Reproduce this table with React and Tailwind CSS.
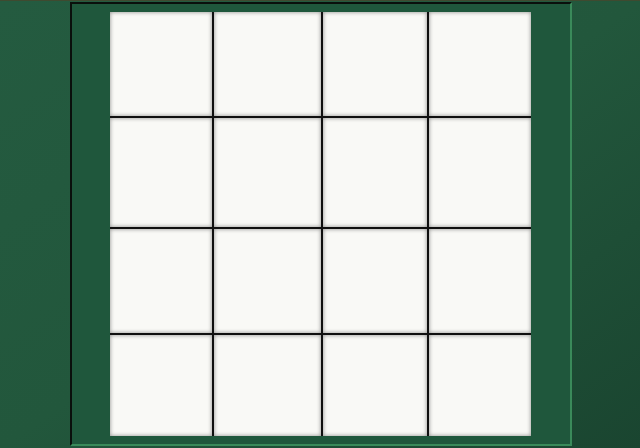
const rows = [0, 1, 2, 3];
const cols = [0, 1, 2, 3];

export default function App() {
    return (
        <div className="w-[640px] h-[448px] overflow-hidden bg-gradient-to-br from-[#245b40] via-[#22573c] to-[#1a4530] border-t border-[#3f4a30]">
            <div className="pl-[70px] pt-[1px]">
                {/* board frame */}
                <div className="w-[502px] h-[444px] bg-[#1f573c] border-l-2 border-t-2 border-[#0a0f0c] border-r-2 border-b-2 border-r-[#3a8a5a] border-b-[#3a8a5a] pl-[38px] pt-[8px]">
                    <div className="grid grid-cols-[102px_107px_104px_102px] grid-rows-[104px_109px_104px_101px] gap-[2px] bg-[#101010] w-fit">
                        {rows.map((r) =>
                            cols.map((c) => (
                                <div
                                    key={r + '-' + c}
                                    className="bg-[#f9f9f6] shadow-[inset_0_0_4px_rgba(0,0,0,0.45)]"
                                />
                            ))
                        )}
                    </div>
                </div>
            </div>
        </div>
    )
}
